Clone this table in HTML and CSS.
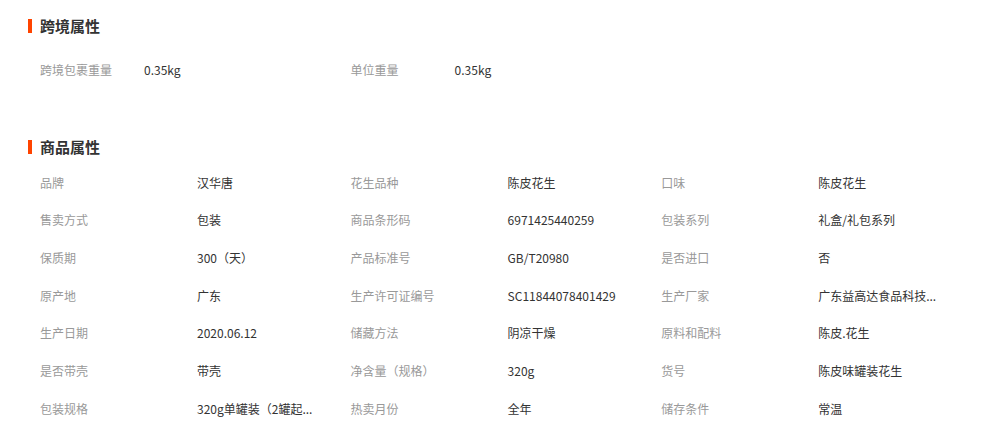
FILE: index.html
```html
<!DOCTYPE html>
<html lang="zh-CN">
<head>
	<meta charset="UTF-8">
	<title>商品属性</title>
	<link rel="stylesheet" href="styles.css">
</head>
<body>
	<div class="section cross">
		<h3 class="title">跨境属性</h3>
		<ul class="attrs">
			<li><span class="name">跨境包裹重量</span><span class="val">0.35kg</span></li>
			<li><span class="name">单位重量</span><span class="val">0.35kg</span></li>
		</ul>
	</div>
	<div class="section goods">
		<h3 class="title">商品属性</h3>
		<ul class="attrs">
			<li><span class="name">品牌</span><span class="val">汉华唐</span></li>
			<li><span class="name">花生品种</span><span class="val">陈皮花生</span></li>
			<li><span class="name">口味</span><span class="val">陈皮花生</span></li>
			<li><span class="name">售卖方式</span><span class="val">包装</span></li>
			<li><span class="name">商品条形码</span><span class="val">6971425440259</span></li>
			<li><span class="name">包装系列</span><span class="val">礼盒/礼包系列</span></li>
			<li><span class="name">保质期</span><span class="val">300（天）</span></li>
			<li><span class="name">产品标准号</span><span class="val">GB/T20980</span></li>
			<li><span class="name">是否进口</span><span class="val">否</span></li>
			<li><span class="name">原产地</span><span class="val">广东</span></li>
			<li><span class="name">生产许可证编号</span><span class="val">SC11844078401429</span></li>
			<li><span class="name">生产厂家</span><span class="val">广东益高达食品科技...</span></li>
			<li><span class="name">生产日期</span><span class="val">2020.06.12</span></li>
			<li><span class="name">储藏方法</span><span class="val">阴凉干燥</span></li>
			<li><span class="name">原料和配料</span><span class="val">陈皮.花生</span></li>
			<li><span class="name">是否带壳</span><span class="val">带壳</span></li>
			<li><span class="name">净含量（规格）</span><span class="val">320g</span></li>
			<li><span class="name">货号</span><span class="val">陈皮味罐装花生</span></li>
			<li><span class="name">包装规格</span><span class="val">320g单罐装（2罐起...</span></li>
			<li><span class="name">热卖月份</span><span class="val">全年</span></li>
			<li><span class="name">储存条件</span><span class="val">常温</span></li>
		</ul>
	</div>
</body>
</html>
```

FILE: styles.css
```css
*{
	margin:0;
	padding:0;
}
body{
	font-family:"Noto Sans CJK SC","Microsoft YaHei",sans-serif;
	font-size:12px;
	color:#333;
	background:#fff;
}
ul{
	list-style:none;
}
.section{
	padding-left:28px;
}
.title{
	border-left:4px solid #ff4400;
	padding-left:8px;
	height:14px;
	line-height:14px;
	font-size:15px;
	font-weight:bold;
	color:#333;
}
.cross{
	padding-top:19px;
}
.cross .attrs{
	margin-top:18px;
}
.goods{
	margin-top:51px;
}
.goods .attrs{
	margin-top:10px;
}
.attrs{
	display:grid;
	grid-template-columns:repeat(3,310.6px);
	padding-left:12px;
}
.attrs li{
	display:flex;
	height:37.7px;
	line-height:37.7px;
}
.name{
	color:#999;
	width:157px;
	flex-shrink:0;
}
.cross .name{
	width:104px;
}
.val{
	color:#333;
	white-space:nowrap;
}
```
